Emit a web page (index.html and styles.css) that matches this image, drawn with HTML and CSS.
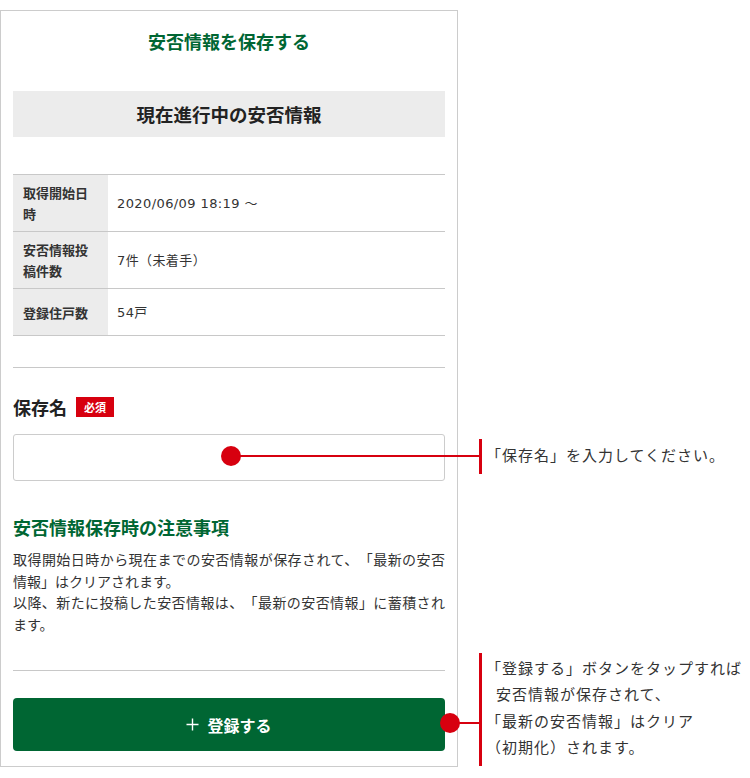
FILE: index.html
```html
<!DOCTYPE html>
<html lang="ja">
<head>
    <meta charset="UTF-8">
    <title>安否情報を保存する</title>
    <link rel="stylesheet" href="styles.css">
</head>
<body>
<div class="stage">
    <div class="phone">
        <h1 class="page-title">安否情報を保存する</h1>
        <h2 class="current">現在進行中の安否情報</h2>
        <div class="info">
            <div class="info-row">
                <div class="info-head">取得開始日時</div>
                <div class="info-value">2020/06/09 18:19 〜</div>
            </div>
            <div class="info-row">
                <div class="info-head">安否情報投稿件数</div>
                <div class="info-value">7件（未着手）</div>
            </div>
            <div class="info-row">
                <div class="info-head">登録住戸数</div>
                <div class="info-value">54戸</div>
            </div>
        </div>
        <hr class="divider divider-top">
        <div class="field-label">
            <span>保存名</span>
            <span class="required">必須</span>
        </div>
        <input class="field-input" type="text" name="save-name">
        <h3 class="note-title">安否情報保存時の注意事項</h3>
        <p class="note-text">取得開始日時から現在までの安否情報が保存されて、「最新の安否情報」はクリアされます。<br>以降、新たに投稿した安否情報は、「最新の安否情報」に蓄積されます。</p>
        <hr class="divider divider-bottom">
        <button class="submit" type="button">
            <svg class="plus" width="13" height="13" viewBox="0 0 13 13"><path d="M6.5 0.5v12M0.5 6.5h12" stroke="#fff" stroke-width="1.4" fill="none"/></svg>
            <span>登録する</span>
        </button>
    </div>

    <!-- 注釈 -->
    <div class="callout callout-name">
        <span class="dot"></span>
        <span class="line"></span>
        <span class="bar"></span>
        <p class="callout-text">「保存名」を入力してください。</p>
    </div>
    <div class="callout callout-submit">
        <span class="dot"></span>
        <span class="line"></span>
        <span class="bar"></span>
        <p class="callout-text">「登録する」ボタンをタップすれば<br><span class="indent">安否情報が保存されて、</span><br>「最新の安否情報」はクリア<br>（初期化）されます。</p>
    </div>
</div>
</body>
</html>
```

FILE: styles.css
```css
body {
    margin: 0;
    font-family: "Noto Sans CJK JP", "Noto Sans", sans-serif;
    color: #333;
    background-color: #fff;
    text-spacing-trim: space-all;
}
.stage {
    position: relative;
    width: 750px;
    height: 778px;
    padding-top: 10px;
    box-sizing: border-box;
    overflow: hidden;
}
.phone {
    width: 458px;
    box-sizing: border-box;
    border: 1px solid #ccc;
    padding: 0 12px 15px;
}
.page-title {
    margin: 0;
    padding-top: 17px;
    font-size: 18px;
    line-height: 26px;
    font-weight: bold;
    color: #006633;
    text-align: center;
}
.current {
    margin: 37px 0 0;
    height: 46px;
    line-height: 46px;
    background-color: #ececec;
    font-size: 18.5px;
    font-weight: bold;
    color: #222;
    text-align: center;
}
.info {
    margin-top: 37px;
    border-top: 1px solid #c8c8c8;
}
.info-row {
    display: grid;
    grid-template-columns: 95px 1fr;
    min-height: 47px;
    box-sizing: border-box;
    border-bottom: 1px solid #c8c8c8;
}
.info-head {
    display: flex;
    align-items: center;
    padding: 7px 10px;
    background-color: #ececec;
    font-size: 13px;
    line-height: 21px;
    font-weight: bold;
    color: #333;
}
.info-value {
    display: flex;
    align-items: center;
    padding: 7px 9px;
    font-family: "DejaVu Sans", "Noto Sans CJK JP", sans-serif;
    font-size: 13px;
    line-height: 21px;
    letter-spacing: 0.4px;
    color: #333;
}
.divider {
    margin: 0;
    height: 1px;
    border: none;
    background-color: #c8c8c8;
}
.divider-top {
    margin-top: 31px;
}
.divider-bottom {
    margin-top: 35px;
}
.field-label {
    display: flex;
    align-items: center;
    gap: 9px;
    margin-top: 29px;
    height: 20px;
    font-size: 18px;
    font-weight: bold;
    color: #222;
}
.required {
    display: inline-block;
    height: 20px;
    line-height: 20px;
    padding: 0 8px;
    background-color: #d7000f;
    color: #fff;
    font-size: 11px;
    font-weight: bold;
}
.field-input {
    display: block;
    width: 100%;
    height: 47px;
    margin-top: 17px;
    box-sizing: border-box;
    border: 1px solid #ccc;
    border-radius: 3px;
    background-color: #fff;
}
.note-title {
    margin: 34px 0 0;
    font-size: 18px;
    line-height: 24px;
    font-weight: bold;
    color: #006633;
}
.note-text {
    margin: 10px 0 0;
    font-size: 14px;
    line-height: 21.5px;
    color: #333;
    text-align: justify;
}
.submit {
    display: flex;
    align-items: center;
    justify-content: center;
    gap: 8px;
    width: 100%;
    height: 53px;
    margin-top: 27px;
    border: none;
    border-radius: 4px;
    background-color: #006633;
    color: #fff;
    font-family: inherit;
    font-size: 16px;
    font-weight: bold;
    cursor: pointer;
}
.callout {
    position: absolute;
    top: 0;
    left: 0;
}
.callout .dot {
    position: absolute;
    width: 20px;
    height: 20px;
    border-radius: 50%;
    background-color: #d7000f;
}
.callout .line {
    position: absolute;
    height: 2px;
    background-color: #d7000f;
}
.callout .bar {
    position: absolute;
    width: 3px;
    background-color: #d7000f;
}
.callout-text {
    position: absolute;
    margin: 0;
    font-size: 15px;
    letter-spacing: 1px;
    color: #333;
    white-space: nowrap;
}
.callout-name .dot {
    left: 221px;
    top: 446px;
}
.callout-name .line {
    left: 231px;
    top: 455px;
    width: 250px;
}
.callout-name .bar {
    left: 479px;
    top: 439px;
    height: 35px;
}
.callout-name .callout-text {
    left: 486px;
    top: 444px;
    line-height: 22px;
}
.callout-submit .dot {
    left: 440px;
    top: 713px;
}
.callout-submit .line {
    left: 450px;
    top: 722px;
    width: 31px;
}
.callout-submit .bar {
    left: 479px;
    top: 653px;
    height: 113px;
}
.callout-submit .callout-text {
    left: 486px;
    top: 655px;
    line-height: 26.3px;
}
.indent {
    padding-left: 10px;
}
```
